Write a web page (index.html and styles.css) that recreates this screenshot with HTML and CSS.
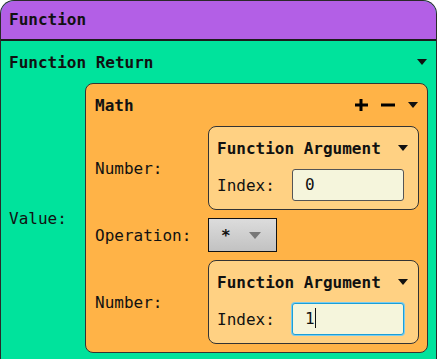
FILE: index.html
```html
<!DOCTYPE html>
<html>
<head>
<meta charset="utf-8">
<link rel="stylesheet" href="styles.css">
</head>
<body>
<div class="window">
  <div class="win-head">Function</div>
  <div class="win-body">
    <div class="row-title">
      <span class="bold">Function Return</span>
      <span class="tri"></span>
    </div>
    <div class="value-row">
      <span class="label value-label">Value:</span>
      <div class="math">
        <div class="math-head">
          <span class="bold">Math</span>
          <span class="icons">
            <svg width="16" height="12" viewBox="0 0 16 12"><path d="M8 0v12M2 6h13" stroke="#000" stroke-width="3"/></svg>
            <svg width="15" height="12" viewBox="0 0 15 12"><path d="M1 6h14" stroke="#000" stroke-width="3"/></svg>
            <span class="tri small"></span>
          </span>
        </div>
        <div class="math-grid">
          <span class="label">Number:</span>
          <div class="arg">
            <div class="arg-head"><span class="bold">Function Argument</span><span class="tri"></span></div>
            <div class="arg-row"><span class="label">Index:</span><div class="input">0</div></div>
          </div>
          <span class="label">Operation:</span>
          <div class="select"><span>*</span><span class="tri gray"></span></div>
          <span class="label">Number:</span>
          <div class="arg">
            <div class="arg-head"><span class="bold">Function Argument</span><span class="tri"></span></div>
            <div class="arg-row"><span class="label">Index:</span><div class="input focus">1<span class="caret"></span></div></div>
          </div>
        </div>
      </div>
    </div>
  </div>
</div>
</body>
</html>
```
FILE: styles.css
```css
html, body {
  margin: 0;
  padding: 0;
  background: #fff;
  overflow: hidden;
}
body {
  font-family: "DejaVu Sans Mono", monospace;
  font-size: 16px;
  color: #111;
  width: 437px;
  height: 359px;
}
.window {
  width: 435px;
  height: 358px;
  border: 1px solid #2a2a2a;
  border-bottom: none;
  border-radius: 14px 14px 0 0;
  overflow: hidden;
  background: #00e39c;
}
.win-head {
  background: #b35fe6;
  height: 38px;
  line-height: 38px;
  padding-left: 8px;
  font-weight: bold;
  border-bottom: 2px solid #1c1c1c;
}
.bold {
  font-weight: bold;
}
.row-title {
  display: flex;
  justify-content: space-between;
  align-items: center;
  height: 42px;
  padding: 0 9px 0 8px;
}
.tri {
  width: 0;
  height: 0;
  border-left: 5px solid transparent;
  border-right: 5px solid transparent;
  border-top: 6px solid #111;
}
.tri.gray {
  border-top-color: #777;
  border-left-width: 6px;
  border-right-width: 6px;
  border-top-width: 7px;
}
.value-row {
  display: flex;
  align-items: center;
  padding-left: 8px;
}
.value-label {
  width: 76px;
}
.math {
  width: 343px;
  background: #ffb347;
  border: 1px solid #333;
  border-radius: 8px;
  padding: 0 8px 8px 9px;
  box-sizing: border-box;
}
.math-head {
  display: flex;
  justify-content: space-between;
  align-items: center;
  height: 42px;
  padding-right: 1px;
}
.icons {
  display: flex;
  align-items: center;
  gap: 11px;
}
.icons .tri {
  margin-left: 2px;
}
.math-grid {
  display: grid;
  grid-template-columns: 113px 1fr;
  row-gap: 8px;
  align-items: center;
}
.arg {
  background: #ffd183;
  border: 1px solid #333;
  border-radius: 8px;
  padding: 8px 10px 8px 8px;
}
.arg-head {
  display: flex;
  justify-content: space-between;
  align-items: center;
  height: 26px;
  margin-bottom: 8px;
}
.arg-row {
  display: flex;
  align-items: center;
  justify-content: space-between;
  padding-right: 4px;
}
.input {
  width: 110px;
  height: 30px;
  background: #f5f5dc;
  border: 1px solid #555;
  border-radius: 3px;
  line-height: 30px;
  text-indent: 12px;
}
.input.focus {
  border: 1px solid #1a9fd9;
  box-shadow: 0 0 0 1px #7ccbec;
}
.caret {
  display: inline-block;
  width: 1px;
  height: 20px;
  background: #111;
  vertical-align: -4px;
}
.select {
  width: 40px;
  height: 32px;
  border: 1px solid #111;
  background: linear-gradient(#dcdcdc, #c2c2c2);
  display: flex;
  align-items: center;
  justify-content: space-between;
  padding: 0 15px 0 12px;
  font-weight: bold;
}
```
